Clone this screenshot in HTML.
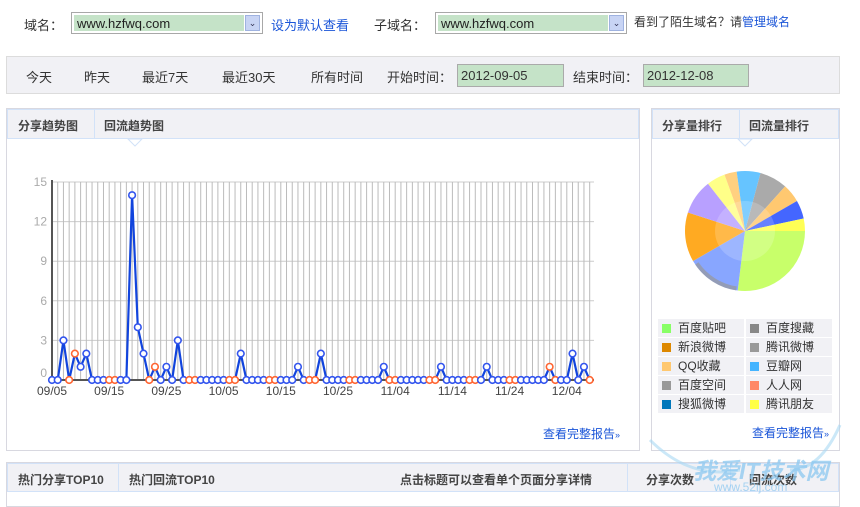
<!DOCTYPE html>
<html><head><meta charset="utf-8"><style>
*{margin:0;padding:0;box-sizing:border-box}
body{width:860px;height:501px;background:#fff;font-family:"Liberation Sans","Noto Sans CJK SC",sans-serif;font-size:13px;color:#333;position:relative;overflow:hidden}
.a{position:absolute;white-space:nowrap}
.sel{position:absolute;border:1px solid #a8a8a8;background:#fff;height:22px}
.sel .in{position:absolute;left:2px;top:2px;bottom:2px;right:18px;background:#c5e3c8;font-size:13px;line-height:17px;padding-left:3px;color:#222}
.sel .ar{position:absolute;right:2px;top:2px;width:15px;bottom:2px;background:#c8d4f4;border:1px solid #9fb2e0;font-size:9px;text-align:center;line-height:15px;color:#335}
.blue{color:#1a55d8}
.bar{position:absolute;left:6px;top:56px;width:834px;height:38px;background:#f1f1f5;border:1px solid #dcdcdc}
.dt{position:absolute;top:7px;height:23px;border:1px solid #aaa;background:#c5e3c8;font-size:13px;line-height:21px;padding-left:3px}
.panel{position:absolute;border:1px solid #d8d8e0;background:#fff}
.tabs{position:absolute;left:0;top:0;right:0;height:30px;background:#f1f1f5;border:1px solid #d2e2f8;font-weight:bold;font-size:12px;color:#444}
.tabs span{position:absolute;top:7px}
.tabs i{position:absolute;top:0;bottom:0;width:1px;background:#d2e2f8}
.leg{position:absolute;left:658px;width:174px;top:319px}
.leg div{position:absolute;width:86px;height:18px;background:#f1f1f5;font-size:12px;line-height:18px;padding-left:20px;color:#333}
.leg b{position:absolute;left:4px;top:5px;width:9px;height:9px}
</style></head><body>
<div class="a" style="left:24px;top:15px">域名：</div>
<div class="sel" style="left:71px;top:12px;width:192px"><div class="in">www.hzfwq.com</div><div class="ar">⌄</div></div>
<div class="a blue" style="left:271px;top:15px">设为默认查看</div>
<div class="a" style="left:374px;top:15px">子域名：</div>
<div class="sel" style="left:435px;top:12px;width:192px"><div class="in">www.hzfwq.com</div><div class="ar">⌄</div></div>
<div class="a" style="left:634px;top:13px;font-size:12px">看到了陌生域名？请<span class="blue">管理域名</span></div>

<div class="bar">
<span class="a" style="left:19px;top:10px">今天</span>
<span class="a" style="left:77px;top:10px">昨天</span>
<span class="a" style="left:135px;top:10px">最近7天</span>
<span class="a" style="left:215px;top:10px">最近30天</span>
<span class="a" style="left:304px;top:10px">所有时间</span>
<span class="a" style="left:380px;top:10px">开始时间：</span>
<div class="dt" style="left:450px;width:107px">2012-09-05</div>
<span class="a" style="left:566px;top:10px">结束时间：</span>
<div class="dt" style="left:636px;width:106px">2012-12-08</div>
</div>

<div class="panel" style="left:6px;top:108px;width:634px;height:343px">
<div class="tabs"><span style="left:10px">分享趋势图</span><i style="left:86px"></i><span style="left:96px">回流趋势图</span></div>
<div class="a blue" style="left:536px;top:316px;font-size:12px">查看完整报告<span style="font-size:9px">»</span></div>
</div>
<div class="panel" style="left:651px;top:108px;width:189px;height:343px">
<div class="tabs"><span style="left:9px">分享量排行</span><i style="left:86px"></i><span style="left:96px">回流量排行</span></div>
<div class="a blue" style="left:100px;top:315px;font-size:12px">查看完整报告<span style="font-size:9px">»</span></div>
</div>

<div class="leg">
<div style="left:0;top:0"><b style="background:#88ff66"></b>百度贴吧</div>
<div style="left:88px;top:0"><b style="background:#888"></b>百度搜藏</div>
<div style="left:0;top:19px"><b style="background:#dd8800"></b>新浪微博</div>
<div style="left:88px;top:19px"><b style="background:#999"></b>腾讯微博</div>
<div style="left:0;top:38px"><b style="background:#ffc870"></b>QQ收藏</div>
<div style="left:88px;top:38px"><b style="background:#44b4ff"></b>豆瓣网</div>
<div style="left:0;top:57px"><b style="background:#999"></b>百度空间</div>
<div style="left:88px;top:57px"><b style="background:#ff8866"></b>人人网</div>
<div style="left:0;top:76px"><b style="background:#0077bb"></b>搜狐微博</div>
<div style="left:88px;top:76px"><b style="background:#ffff44"></b>腾讯朋友</div>
</div>

<div class="panel" style="left:6px;top:462px;width:834px;height:45px">
<div class="tabs" style="height:29px"><span style="left:10px">热门分享TOP10</span><i style="left:110px"></i><span style="left:121px">热门回流TOP10</span><span style="left:392px">点击标题可以查看单个页面分享详情</span><i style="left:619px"></i><span style="left:638px">分享次数</span><i style="left:722px"></i><span style="left:741px">回流次数</span></div>
</div>
<svg class="a" style="left:0;top:0" width="860" height="501" id="sv"></svg>
<div class="a" style="left:693px;top:452px;font-size:23px;font-weight:bold;font-style:italic;color:#8cc8f0;opacity:.75">我爱IT技术网</div>
<div class="a" style="left:714px;top:480px;font-size:12px;color:#8cc8f0;opacity:.75">www.52ij.com</div>

<script>
var s='',x0=52,dx=5.72,y0=380,u=13.2;
for(var k=0;k<=5;k++){var y=y0-k*3*u;s+='<line x1="52" x2="594" y1="'+y+'" y2="'+y+'" stroke="#ccc"/>';s+='<text x="47" y="'+(k==0?y-3:y+4)+'" text-anchor="end" font-size="12" fill="#aaa" font-family="Liberation Sans">'+(k*3)+'</text>';}
for(var i=0;i<=94;i++){var x=x0+i*dx;s+='<line x1="'+x+'" x2="'+x+'" y1="182" y2="380" stroke="#bbb"/>';}
s+='<line x1="52" x2="52" y1="180" y2="381" stroke="#555" stroke-width="2"/><line x1="52" x2="594" y1="380" y2="380" stroke="#555" stroke-width="2"/>';
var labs=['09/05','09/15','09/25','10/05','10/15','10/25','11/04','11/14','11/24','12/04'];
for(var j=0;j<10;j++)s+='<text x="'+(x0+j*10*dx)+'" y="395" text-anchor="middle" font-size="12" fill="#444" font-family="Liberation Sans">'+labs[j]+'</text>';
var v={2:3,4:2,5:1,6:2,14:14,15:4,16:2,18:1,20:1,22:3,33:2,43:1,47:2,58:1,68:1,76:1,87:1,91:2,93:1};
var pts='';for(i=0;i<=94;i++){pts+=(x0+i*dx)+','+(y0-(v[i]||0)*u)+' ';}
s+='<polyline points="'+pts+'" fill="none" stroke="#1144dd" stroke-width="2.2"/>';
for(i=0;i<=94;i++){var m=i%7;var c=(m==3||m==4)?'#ff6633':'#3355ee';s+='<circle cx="'+(x0+i*dx)+'" cy="'+(y0-(v[i]||0)*u)+'" r="3.3" fill="#fff" stroke="'+c+'" stroke-width="1.6"/>';}
s+='<polygon points="128,139 142,139 135,146" fill="#fff" stroke="#d2e2f8"/><polygon points="738,139 752,139 745,146" fill="#fff" stroke="#d2e2f8"/>';
var cx=745,cy=231,r=60,sl=[[0,97,'#c8ff6a'],[97,150,'#88a6ff'],[150,198,'#ffaa22'],[198,232,'#b8a0ff'],[232,250,'#ffff88'],[250,262,'#ffd080'],[262,285,'#66c4ff'],[285,312,'#aaaaaa'],[312,330,'#ffc870'],[330,348,'#4466ff'],[348,360,'#ffff55']];
sl.forEach(function(a){var a1=a[0]*Math.PI/180,a2=a[1]*Math.PI/180;s+='<path d="M'+cx+','+cy+' L'+(cx+r*Math.cos(a1))+','+(cy+r*Math.sin(a1))+' A'+r+','+r+' 0 0,1 '+(cx+r*Math.cos(a2))+','+(cy+r*Math.sin(a2))+' Z" fill="'+a[2]+'"/>';});
var rr=58;
s+='<path d="M'+(cx+rr*Math.cos(1.72))+','+(cy+rr*Math.sin(1.72))+' A'+rr+','+rr+' 0 0,1 '+(cx+rr*Math.cos(2.55))+','+(cy+rr*Math.sin(2.55))+'" fill="none" stroke="#999" stroke-width="4" opacity=".7"/>';
s+='<circle cx="'+cx+'" cy="'+cy+'" r="30" fill="#fff" opacity=".18"/>';
s+='<path d="M650,440 Q690,480 740,470" fill="none" stroke="#a8d8f4" stroke-width="3" opacity=".6"/><path d="M840,425 Q820,470 790,470" fill="none" stroke="#a8d8f4" stroke-width="3" opacity=".6"/>';
document.getElementById('sv').innerHTML=s;
</script>
</body></html>
